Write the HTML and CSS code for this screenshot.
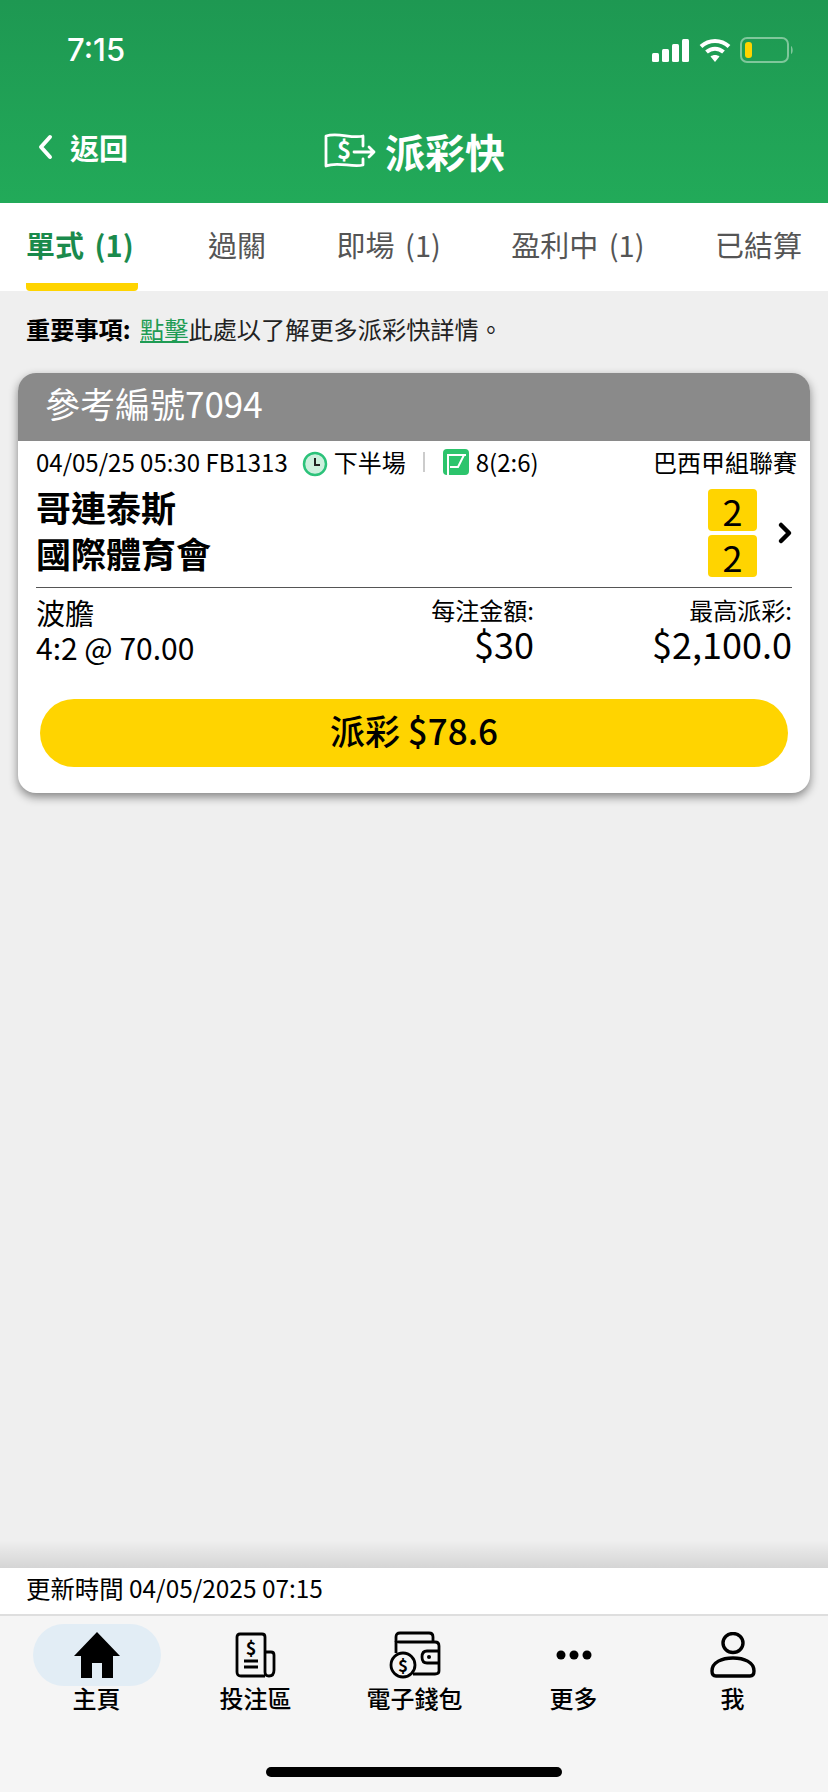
FILE: index.html
```html
<!DOCTYPE html>
<html lang="zh-Hant">
<head>
<meta charset="UTF-8" />
<meta name="viewport" content="width=device-width, initial-scale=1" />
<title>派彩快</title>
<link rel="stylesheet" href="styles.css">
</head>
<body>
<div class="app">
  <header class="top">
    <div class="status">
      <span class="time">7:15</span>
      <div class="status-icons">
        <svg width="38" height="24" viewBox="0 0 38 24"><g fill="#fff"><rect x="0" y="15" width="7" height="9" rx="1.5"/><rect x="10" y="11" width="7" height="13" rx="1.5"/><rect x="20" y="6" width="7" height="18" rx="1.5"/><rect x="30" y="1" width="7" height="23" rx="1.5"/></g></svg>
        <svg width="32" height="26" viewBox="0 0 32 26"><g fill="none" stroke="#fff" stroke-width="4"><path d="M2 9.5 C10 2 22 2 30 9.5"/><path d="M7.5 15 C12.5 10.5 19.500 10.500 24.500 15"/></g><path d="M11.500 19.500 C14 17.500 18 17.500 20.500 19.500 L16 25 Z" fill="#fff"/></svg>
        <svg class="battery" width="54" height="26" viewBox="0 0 54 26"><rect x="1" y="1" width="47" height="24" rx="6" fill="none" stroke="#7fc79b" stroke-width="2"/><rect x="5" y="5" width="7" height="16" rx="3" fill="#ffd400"/><path d="M51 9 C53 10 53.500 16 51 17 Z" fill="#7fc79b"/></svg>
      </div>
    </div>
    <div class="titlebar">
      <a class="back">
        <svg width="16" height="26" viewBox="0 0 16 26"><path d="M13 3 L4 13 L13 23" fill="none" stroke="#fff" stroke-width="4" stroke-linecap="round" stroke-linejoin="round"/></svg>
        <span>返回</span>
      </a>
      <div class="title">
        <svg width="52" height="38" viewBox="0 0 52 38"><g fill="none" stroke="#fff" stroke-width="2.800" stroke-linejoin="round" stroke-linecap="round"><path d="M39 27 V33 C28 36 14 29 2 34 V4 C14 0 28 7 39 4 V14"/><path d="M30 20 H50 M45 15 L50 20 L45 25"/></g><text x="20" y="27" class="title-dollar">$</text></svg>
        <span>派彩快</span>
      </div>
    </div>
  </header>

  <nav class="tabs">
    <a class="tab active">單式 (1)</a>
    <a class="tab">過關</a>
    <a class="tab">即場 (1)</a>
    <a class="tab">盈利中 (1)</a>
    <a class="tab">已結算</a>
  </nav>

  <main class="content">
    <p class="notice"><b>重要事項:</b> <a class="notice-link">點擊</a>此處以了解更多派彩快詳情。</p>

    <section class="card">
      <div class="card-head">參考編號7094</div>
      <div class="card-body">
        <div class="meta">
          <span>04/05/25 05:30 FB1313</span>
          <svg class="clock" width="26" height="26" viewBox="0 0 26 26"><circle cx="13" cy="13" r="11" fill="#cdf0de" stroke="#2cc27a" stroke-width="2.500"/><path d="M13 7 V14 H18" fill="none" stroke="#222" stroke-width="2"/></svg>
          <span>下半場</span>
          <i class="sep"></i>
          <svg class="pitch" width="26" height="26" viewBox="0 0 26 26"><rect width="26" height="26" rx="4" fill="#2cc46c"/><path d="M5 26 V6 H23 M7 18 H15 L21 6" fill="none" stroke="#fff" stroke-width="2"/></svg>
          <span>8(2:6)</span>
          <span class="league">巴西甲組聯賽</span>
        </div>

        <div class="match">
          <div class="teams">
            <div>哥連泰斯</div>
            <div>國際體育會</div>
          </div>
          <div class="scores">
            <span class="score">2</span>
            <span class="score">2</span>
          </div>
          <svg class="more" width="16" height="26" viewBox="0 0 16 26"><path d="M4 5 L12 13 L4 21" fill="none" stroke="#000" stroke-width="4.500" stroke-linecap="round" stroke-linejoin="round"/></svg>
        </div>

        <div class="bet">
          <div class="bet-type">
            <div>波膽</div>
            <div class="bet-odds">4:2 @ 70.00</div>
          </div>
          <div class="amount stake">
            <div class="amount-label">每注金額:</div>
            <div class="amount-value">$30</div>
          </div>
          <div class="amount">
            <div class="amount-label">最高派彩:</div>
            <div class="amount-value">$2,100.0</div>
          </div>
        </div>

        <button class="payout">派彩 $78.6</button>
      </div>
    </section>
  </main>

  <div class="updated">更新時間 04/05/2025 07:15</div>

  <footer class="bottom">
    <div class="nav-items">
      <a class="nav-item current">
        <span class="nav-icon">
          <svg width="48" height="46" viewBox="0 0 48 46"><path d="M24 0 L47 24 H40 V46 H29 V31 H19 V46 H8 V24 H1 Z" fill="#000"/></svg>
        </span>
        <span>主頁</span>
      </a>
      <a class="nav-item">
        <span class="nav-icon">
          <svg width="42" height="46" viewBox="0 0 42 46"><g fill="none" stroke="#000" stroke-width="2.800" stroke-linejoin="round"><path d="M30 44 H6 Q2 44 2 40 V5 Q2 2 5 2 H27 Q30 2 30 5 V40 Q30 44 34 44 Q39 44 39 38 V23 Q39 20 36 20 H30"/><path d="M9 29 H23 M9 35 H23"/></g><text x="16" y="23" class="nav-dollar">$</text></svg>
        </span>
        <span>投注區</span>
      </a>
      <a class="nav-item">
        <span class="nav-icon">
          <svg width="52" height="48" viewBox="0 0 52 48"><g fill="none" stroke="#000" stroke-width="2.800" stroke-linejoin="round"><path d="M7 22 V6 Q7 2 11 2 H40 Q44 2 44 6 V11"/><path d="M7 10 Q7 11 11 11 H46 Q50 11 50 15 V40 Q50 43 46 43 H24"/><path d="M50 20 H38 Q33 20 33 26 Q33 32 38 32 H50"/><circle cx="14" cy="34" r="12"/></g><circle cx="40" cy="26" r="2" fill="#000"/><text x="14" y="40.500" class="wallet-dollar">$</text></svg>
        </span>
        <span>電子錢包</span>
      </a>
      <a class="nav-item">
        <span class="nav-icon">
          <svg width="36" height="46" viewBox="0 0 36 46"><g fill="#000"><circle cx="5" cy="23" r="4.500"/><circle cx="18" cy="23" r="4.500"/><circle cx="31" cy="23" r="4.500"/></g></svg>
        </span>
        <span>更多</span>
      </a>
      <a class="nav-item">
        <span class="nav-icon">
          <svg width="46" height="46" viewBox="0 0 46 46"><g fill="none" stroke="#000" stroke-width="3.400"><ellipse cx="23" cy="11" rx="10" ry="9.500"/><path d="M2 39 C2 30 12 26 23 26 C34 26 44 30 44 39 Q44 44 40 44 H6 Q2 44 2 39 Z"/></g></svg>
        </span>
        <span>我</span>
      </a>
    </div>
    <div class="home-bar"></div>
  </footer>
</div>
</body>
</html>
```

FILE: styles.css
```css
:root {
  --green: #1f9c54;
  --yellow: #ffd400;
  --bg: #efefef;
}

* {
  box-sizing: border-box;
}

body {
  margin: 0;
  background: var(--bg);
  color: #000;
  font-family: "Noto Sans CJK TC", "Noto Sans", sans-serif;
}

.app {
  width: 828px;
  height: 1792px;
  display: flex;
  flex-direction: column;
  overflow: hidden;
}

/* header */
.top {
  height: 203px;
  background: linear-gradient(#1e9852, #22aa59);
  color: #fff;
}

.status {
  height: 100px;
  padding: 31px 34px 0 67px;
  display: flex;
  justify-content: space-between;
}

.time {
  font-family: Inter, sans-serif;
  font-weight: 500;
  font-size: 31px;
  line-height: 38px;
}

.status-icons {
  display: flex;
  align-items: center;
  gap: 9px;
  height: 38px;
}

.titlebar {
  position: relative;
  height: 103px;
  display: flex;
  justify-content: center;
}

.back {
  position: absolute;
  left: 37px;
  top: 27px;
  display: flex;
  align-items: center;
  gap: 17px;
  font-size: 29px;
  font-weight: 700;
  line-height: 40px;
}

.title {
  display: flex;
  align-items: center;
  gap: 9px;
  height: 62px;
  margin: 20px 0 0 1px;
  font-size: 40px;
  font-weight: 700;
}

.title-dollar {
  fill: #fff;
  font-size: 24px;
  font-weight: 700;
  text-anchor: middle;
}

/* tabs */
.tabs {
  height: 88px;
  padding: 0 26px;
  background: #fff;
  display: flex;
  justify-content: space-between;
}

.tab {
  padding-top: 22px;
  font-size: 29px;
  line-height: 38px;
  word-spacing: 4px;
  color: #555;
}

.tab.active {
  height: 88px;
  padding-right: 4px;
  color: #1a8a4c;
  font-weight: 700;
  white-space: nowrap;
  border-bottom: 8px solid var(--yellow);
  border-radius: 0 0 4px 4px;
}

/* content */
.content {
  flex: 1;
  padding: 0 18px;
}

.notice {
  margin: 22px 0 0 8px;
  font-size: 24.2px;
  line-height: 32px;
  color: #222;
}

.notice b {
  margin-right: 4px;
  color: #000;
}

.notice-link {
  color: #1f9c54;
  text-decoration: underline;
}

.card {
  margin-top: 28px;
  height: 420px;
  background: #fff;
  border-radius: 18px;
  box-shadow: 0 4px 10px rgba(0, 0, 0, 0.45);
  overflow: hidden;
}

.card-head {
  height: 68px;
  padding-left: 27px;
  background: #8a8a8a;
  color: #fff;
  font-size: 35px;
  line-height: 60px;
}

.card-body {
  padding: 3px 18px 0;
}

.meta {
  height: 36px;
  display: flex;
  align-items: center;
  font-size: 24px;
  line-height: 36px;
  white-space: nowrap;
}

.clock {
  margin: 3px 6px 0 14px;
}

.sep {
  width: 2px;
  height: 20px;
  margin: 0 18px 0 17px;
  background: #ccc;
}

.pitch {
  margin-right: 7px;
}

.league {
  margin: 0 -5px 0 auto;
}

.match {
  position: relative;
  height: 108px;
  padding-top: 4px;
  display: flex;
  justify-content: space-between;
  border-bottom: 1px solid #555;
}

.teams {
  font-size: 35px;
  font-weight: 700;
  line-height: 46px;
}

.scores {
  display: flex;
  flex-direction: column;
  gap: 4px;
  margin: 5px 35px 0 0;
}

.score {
  width: 49px;
  height: 42px;
  background: var(--yellow);
  border-radius: 4px;
  text-align: center;
  font-size: 36px;
  line-height: 42px;
}

.more {
  position: absolute;
  right: -1px;
  top: 40px;
}

.bet {
  display: flex;
  margin-top: 6px;
  height: 86px;
}

.bet-type {
  flex: 1;
  font-size: 29px;
  line-height: 37px;
}

.bet-odds {
  font-size: 30px;
  line-height: 32px;
}

.amount {
  width: 258px;
  text-align: right;
}

.amount.stake {
  width: auto;
}

.amount-label {
  font-size: 24px;
  line-height: 32px;
}

.amount-value {
  font-size: 36px;
  line-height: 35px;
}

.payout {
  display: block;
  width: 748px;
  height: 68px;
  margin: 19px 0 0 4px;
  padding: 0 0 8px;
  border: none;
  border-radius: 34px;
  background: var(--yellow);
  color: #000;
  font-family: inherit;
  font-size: 35px;
  font-weight: 500;
}

/* bottom */
.updated {
  position: relative;
  height: 48px;
  padding-left: 26px;
  background: #fff;
  font-size: 24.4px;
  line-height: 40px;
  border-bottom: 2px solid #dedede;
}

/* fade above the bar */
.updated::before {
  content: "";
  position: absolute;
  left: 0;
  right: 0;
  top: -28px;
  height: 28px;
  background: linear-gradient(rgba(0, 0, 0, 0), rgba(0, 0, 0, 0.11));
}

.bottom {
  height: 176px;
  background: #f5f5f5;
}

.nav-items {
  height: 151px;
  padding: 8px 0 0 17px;
  display: grid;
  grid-template-columns: repeat(5, 159px);
}

.nav-item {
  display: flex;
  flex-direction: column;
  align-items: center;
  font-size: 24px;
  font-weight: 500;
  line-height: 32px;
}

.nav-icon {
  width: 128px;
  height: 62px;
  flex: none;
  border-radius: 31px;
  display: flex;
  align-items: center;
  justify-content: center;
  margin-bottom: -4px;
}

.nav-item.current .nav-icon {
  background: #e2edf5;
}

.nav-dollar {
  font-size: 18px;
  font-weight: 700;
  text-anchor: middle;
}

.wallet-dollar {
  font-size: 17px;
  font-weight: 700;
  text-anchor: middle;
}

.home-bar {
  width: 296px;
  height: 10px;
  margin: 0 0 0 266px;
  border-radius: 5px;
  background: #000;
}
```
